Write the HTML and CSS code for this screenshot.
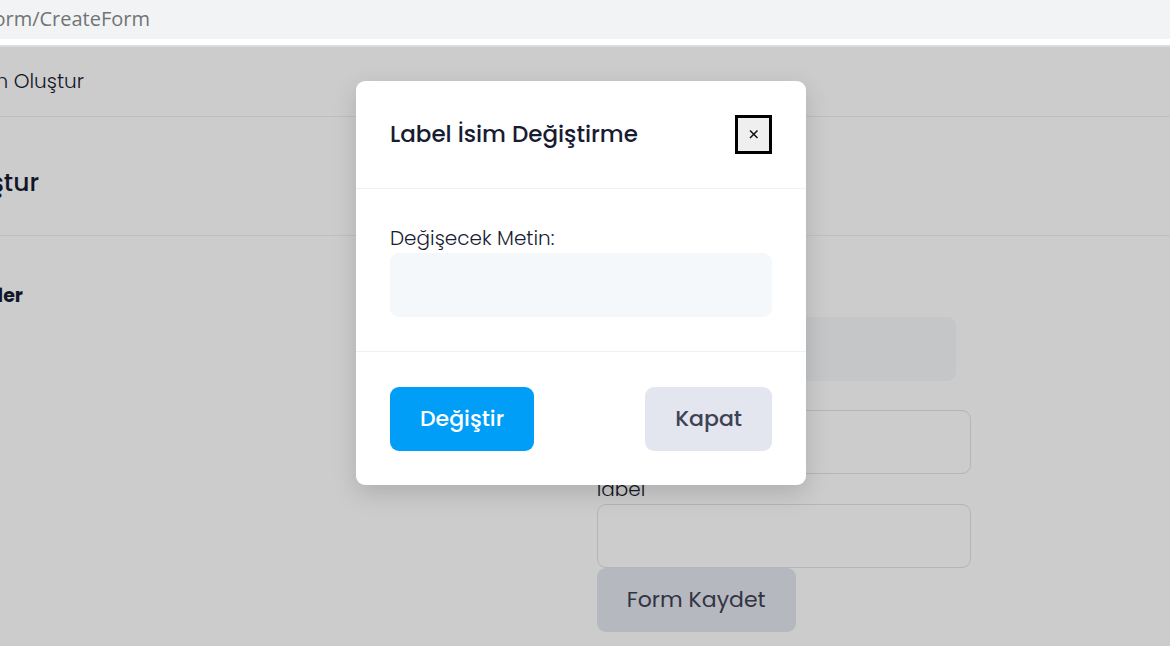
FILE: index.html
```html
<!DOCTYPE html>
<html lang="tr">
<head>
<meta charset="utf-8">
<meta name="viewport" content="width=device-width, initial-scale=1">
<title>Form Oluştur</title>
<link rel="stylesheet" href="styles.css">
</head>
<body>
<header class="address-bar"><span class="address cut">orm/CreateForm</span></header>
<div class="page">
  <nav class="breadcrumb"><span class="breadcrumb-text cut">m Oluştur</span></nav>
  <div class="card-header"><h1 class="card-title cut">ştur</h1></div>
  <main class="content">
    <h2 class="section-title cut">ler</h2>
    <form class="form">
      <input class="field field-solid" type="text" aria-label="Form">
      <input class="field field-first" type="text" aria-label="Metin">
      <label class="label" for="second">label</label>
      <input class="field" id="second" type="text">
      <button class="button button-light save" type="button">Form Kaydet</button>
    </form>
  </main>
  <div class="overlay">
    <section class="modal" role="dialog" aria-modal="true" aria-labelledby="modal-title">
      <header class="modal-header">
        <h2 class="modal-title" id="modal-title">Label İsim Değiştirme</h2>
        <button class="close" type="button" aria-label="Kapat">
          <svg class="close-icon" viewBox="0 0 10 10" aria-hidden="true"><path d="M1 0.500L8.500 8M8.500 0.500L1 8"/></svg>
        </button>
      </header>
      <div class="modal-body">
        <label class="label" for="new-text">Değişecek Metin:</label>
        <input class="field field-modal" id="new-text" type="text">
      </div>
      <footer class="modal-footer">
        <button class="button button-primary" type="button">Değiştir</button>
        <button class="button button-light" type="button">Kapat</button>
      </footer>
    </section>
  </div>
</div>
</body>
</html>
```

FILE: styles.css
```css
* { box-sizing: border-box; }
body {
  margin: 0;
  min-height: 100vh;
  display: flex;
  flex-direction: column;
  background: #fff;
  color: #181c32;
  font-family: Poppins, Inter, sans-serif;
  font-size: 20px;
  font-weight: 300;
}
h1, h2 { margin: 0; }
button, input { font: inherit; }

/* Text that runs in from beyond the left edge of the window */
.cut {
  display: flex;
  justify-content: flex-end;
  overflow: hidden;
  white-space: nowrap;
}

.address-bar {
  height: 39px;
  margin-bottom: 6px;
  background: #f1f3f4;
  color: #717375;
  font-family: "Open Sans", "Noto Sans", sans-serif;
  font-size: 20px;
  font-weight: 400;
  line-height: 38px;
}
.address { width: 150px; }

.page {
  position: relative;
  flex: 1;
  border-top: 2px solid #dadcdd;
}
.breadcrumb {
  display: flex;
  align-items: center;
  height: 70px;
  padding-bottom: 2px;
  border-bottom: 1px solid #eaf0f3;
}
.breadcrumb-text { width: 84px; line-height: 30px; }
.card-header {
  display: flex;
  align-items: center;
  height: 119px;
  padding-top: 14px;
  border-bottom: 1px solid #eff2f2;
}
.card-title {
  width: 39px;
  font-size: 25px;
  font-weight: 500;
  line-height: 36px;
}
.content {
  display: grid;
  grid-template-columns: 51% 32%;
  align-items: start;
}
.section-title {
  width: 23px;
  margin-top: 45px;
  font-size: 19px;
  font-weight: 700;
  line-height: 30px;
}
.form {
  display: flex;
  flex-direction: column;
  padding: 81px 0 13px;
}
.label { line-height: 30px; }
.field {
  width: 100%;
  height: 64px;
  padding: 0 20px;
  border: 1px solid #e1e3ea;
  border-radius: 9px;
  background: #fff;
}
.field-solid {
  width: 96%;
  border-color: #f5f8fa;
  background: #f5f8fa;
}
.field-first { margin-top: 29px; }
.button {
  height: 64px;
  padding: 0 30px 2px;
  border: 0;
  border-radius: 9px;
  font-size: 22px;
  font-weight: 500;
}
.button-light { background: #e3e6ef; color: #3f4254; }
.button-primary { background: #009ef7; color: #fff; }
.save { align-self: flex-start; font-weight: 400; }

.overlay {
  position: absolute;
  inset: 0;
  display: flex;
  align-items: flex-start;
  justify-content: center;
  padding: 34px 8px 0 0;
  background: rgba(0, 0, 0, 0.2);
}
.modal {
  width: 450px;
  max-width: 100%;
  border-radius: 9px;
  background: #fff;
  box-shadow: 0 8px 24px rgba(0, 0, 0, 0.15);
}
.modal-header {
  display: flex;
  align-items: center;
  justify-content: space-between;
  padding: 34px;
  border-bottom: 1px solid #eff2f5;
}
.modal-title {
  padding-bottom: 2px;
  font-size: 23px;
  font-weight: 500;
  line-height: 36px;
}
.close {
  display: grid;
  place-items: center;
  width: 37px;
  height: 39px;
  padding: 0;
  border: 3px solid #000;
  background: #efefef;
}
.close-icon {
  width: 10px;
  height: 10px;
  fill: none;
  stroke: #111;
  stroke-width: 1.5;
}
.modal-body {
  display: flex;
  flex-direction: column;
  padding: 34px;
}
.field-modal { border-color: #f4f8fb; background: #f4f8fb; }
.modal-footer {
  display: flex;
  justify-content: space-between;
  padding: 35px 34px 34px;
  border-top: 1px solid #eff2f5;
}
```
